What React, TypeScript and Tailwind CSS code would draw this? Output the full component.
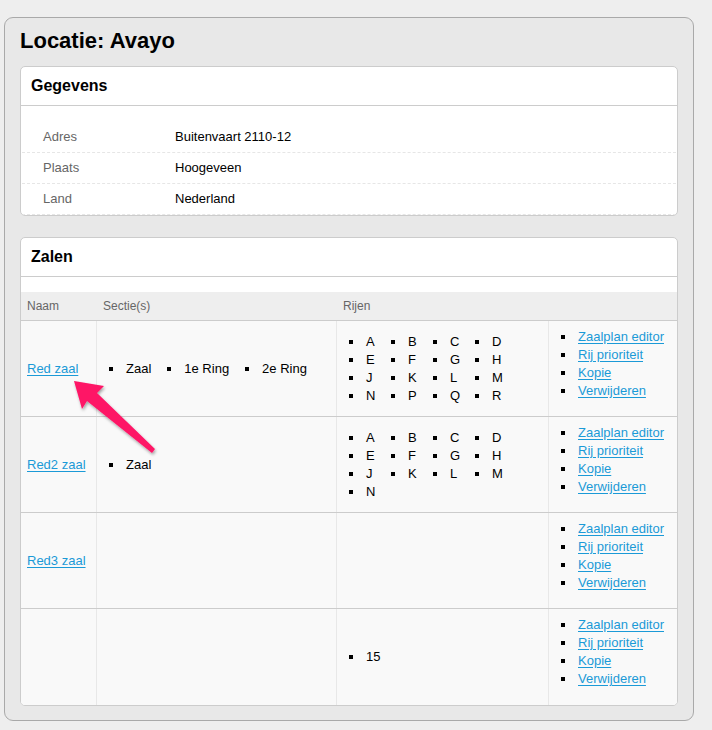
import React from "react";

const Bullet: React.FC = () => (
	<span className="inline-block w-[4px] h-[4px] bg-black shrink-0" />
);

type Zaal = {
	naam: string;
	secties: string[];
	rijen: string[];
};

const zalen: Zaal[] = [
	{ naam: "Red zaal", secties: ["Zaal", "1e Ring", "2e Ring"], rijen: ["A", "B", "C", "D", "E", "F", "G", "H", "J", "K", "L", "M", "N", "P", "Q", "R"] },
	{ naam: "Red2 zaal", secties: ["Zaal"], rijen: ["A", "B", "C", "D", "E", "F", "G", "H", "J", "K", "L", "M", "N"] },
	{ naam: "Red3 zaal", secties: [], rijen: [] },
	{ naam: "", secties: [], rijen: ["15"] },
];

const acties = ["Zaalplan editor", "Rij prioriteit", "Kopie", "Verwijderen"];

const gegevens = [
	["Adres", "Buitenvaart 2110-12"],
	["Plaats", "Hoogeveen"],
	["Land", "Nederland"],
];

const linkClass = "text-[#1b9ad7] underline underline-offset-[2px]";

const Card: React.FC<{ title: string; children: React.ReactNode; className?: string }> = ({ title, children, className }) => (
	<div className={"bg-white border border-[#cccccc] rounded-[5px] overflow-hidden " + (className ?? "")}>
		<div className="h-[39px] px-[10px] flex items-center border-b border-[#cccccc] text-[16px] font-bold text-black">
			{title}
		</div>
		{children}
	</div>
);

export default function App() {
	return (
		<div className="relative min-h-[730px] bg-[#eeeeee] pt-[17px] pl-[4px] font-['Liberation_Sans',Arial,sans-serif] text-[13px] text-black">
			<div className="w-[690px] bg-[#e8e8e8] border border-[#a9a9a9] rounded-[9px] pt-[10px] px-[15px] pb-[14px]">
				<h2 className="text-[22px] font-bold leading-[26px] text-black">Locatie: Avayo</h2>

				<Card title="Gegevens" className="mt-[12px]">
					<div className="pt-[16px] px-[1px]">
						{gegevens.map(([label, value]) => (
							<div key={label} className="flex items-center h-[31px] border-b border-dashed border-[#e6e6e6]">
								<div className="w-[153px] pl-[21px] text-[#666666]">{label}</div>
								<div>{value}</div>
							</div>
						))}
					</div>
				</Card>

				<Card title="Zalen" className="mt-[21px]">
					<div className="pt-[15px]">
						<div className="grid grid-cols-[76px_240px_212px_1fr] h-[29px] items-center bg-[#eeeeee] border-b border-[#cccccc] text-[12px] text-[#666666]">
							<div className="pl-[6px]">Naam</div>
							<div className="pl-[6px]">Sectie(s)</div>
							<div className="pl-[6px]">Rijen</div>
							<div />
						</div>
						{zalen.map((z, i) => (
							<div
								key={i}
								className={
									"grid grid-cols-[76px_240px_212px_1fr] h-[96px] bg-[#f9f9f9] " +
									(i < zalen.length - 1 ? "border-b border-[#cccccc]" : "")
								}
							>
								<div className="flex items-center pl-[6px] border-r border-[#e8e8e8]">
									{z.naam && (
										<a href="#" className={linkClass}>
											{z.naam}
										</a>
									)}
								</div>
								<div className="flex items-center pl-[12px] border-r border-[#e8e8e8]">
									<ul className="flex">
										{z.secties.map((s) => (
											<li key={s} className="flex items-center gap-[13px] mr-[16px] leading-[18px]">
												<Bullet />
												{s}
											</li>
										))}
									</ul>
								</div>
								<div className="flex items-center pl-[12px] border-r border-[#e8e8e8]">
									<ul className="grid grid-cols-[42px_42px_42px_42px]">
										{z.rijen.map((r) => (
											<li key={r} className="flex items-center gap-[13px] leading-[18px]">
												<Bullet />
												{r}
											</li>
										))}
									</ul>
								</div>
								<div className="flex items-center pl-[12px]">
									<ul className="mb-[10px]">
										{acties.map((a) => (
											<li key={a} className="flex items-center gap-[13px] leading-[18px]">
												<Bullet />
												<a href="#" className={linkClass}>
													{a}
												</a>
											</li>
										))}
									</ul>
								</div>
							</div>
						))}
					</div>
				</Card>
			</div>

			<svg className="absolute left-0 top-0 pointer-events-none" width="712" height="730" viewBox="0 0 712 730">
				<defs>
					<filter id="arrowShadow" x="-20%" y="-20%" width="140%" height="140%">
						<feDropShadow dx="1" dy="2" stdDeviation="1.5" floodColor="#000" floodOpacity="0.35" />
					</filter>
				</defs>
				<polygon
					points="74,381 104,386 97,393 155,449 152,453 87,401 82,409"
					fill="#fe1466"
					filter="url(#arrowShadow)"
				/>
			</svg>
		</div>
	);
}
